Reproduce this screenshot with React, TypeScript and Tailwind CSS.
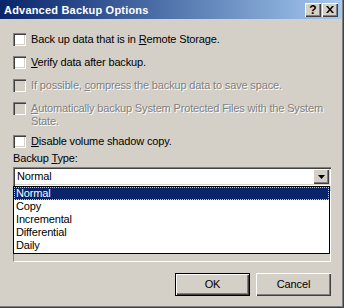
const raised =
  "shadow-[inset_1px_1px_0_#ffffff,inset_-1px_-1px_0_#404040,inset_-2px_-2px_0_#808080]";

function Check({ disabled }: { disabled?: boolean }) {
  return (
    <div
      className={
        "w-[13px] h-[13px] shrink-0 shadow-[inset_1px_1px_0_#808080,inset_2px_2px_0_#404040,inset_-1px_-1px_0_#ffffff,inset_-2px_-2px_0_#d4d0c8] " +
        (disabled ? "bg-[#d4d0c8]" : "bg-white")
      }
    />
  );
}

function Row({
  children,
  disabled,
  className,
}: {
  children: React.ReactNode;
  disabled?: boolean;
  className?: string;
}) {
  return (
    <div className={"flex items-start gap-[5px] " + (className ?? "")}>
      <Check disabled={disabled} />
      <div
        className={
          disabled
            ? "text-[#808080] [text-shadow:1px_1px_0_#ffffff]"
            : "text-black"
        }
      >
        {children}
      </div>
    </div>
  );
}

export default function App() {
  const items = ["Normal", "Copy", "Incremental", "Differential", "Daily"];
  return (
    <div className="w-[344px] h-[308px] bg-[#d4d0c8] relative overflow-hidden text-[11px] leading-[13px] tracking-[-0.15px] text-black font-['Liberation_Sans',Arial,sans-serif] shadow-[inset_-1px_-1px_0_#404040,inset_-2px_-2px_0_#808080]">
      {/* title bar */}
      <div className="w-[342px] h-[19px] flex items-center pr-[4px] bg-gradient-to-r from-[#0a246a] to-[#a6caf0]">
        <span className="pl-[4px] pt-[1px] text-white font-bold tracking-[0.2px]">
          Advanced Backup Options
        </span>
        <div className="ml-auto flex gap-[1px]">
          <div
            className={
              "w-[16px] h-[14px] bg-[#d4d0c8] flex items-center justify-center font-bold text-[12px] leading-[12px] tracking-normal " +
              raised
            }
          >
            ?
          </div>
          <div
            className={
              "w-[16px] h-[14px] bg-[#d4d0c8] flex items-center justify-center " +
              raised
            }
          >
            <svg width="8" height="7" viewBox="0 0 8 7" className="-mt-[1px]">
              <path d="M0 0h2l2 2.5L6 0h2L5 3.5 8 7H6L4 4.5 2 7H0l3-3.5z" fill="#000" />
            </svg>
          </div>
        </div>
      </div>

      {/* body */}
      <div className="pl-[13px] pr-[13px]">
        <Row className="mt-[14px]">
          Back up data that is in <u>R</u>emote Storage.
        </Row>
        <Row className="mt-[10px]">
          <u>V</u>erify data after backup.
        </Row>
        <Row className="mt-[10px]" disabled>
          If possible, <u>c</u>ompress the backup data to save space.
        </Row>
        <Row className="mt-[10px]" disabled>
          <u>A</u>utomatically backup System Protected Files with the System
          <br />
          State.
        </Row>
        <Row className="mt-[7px]">
          <u>D</u>isable volume shadow copy.
        </Row>

        <div className="mt-[4px]">
          Backup <u>T</u>ype:
        </div>

        {/* combo box */}
        <div className="relative mt-[2px]">
          <div className="h-[19px] w-[318px] bg-white flex items-center shadow-[inset_1px_1px_0_#808080,inset_2px_2px_0_#404040,inset_-1px_-1px_0_#ffffff,inset_-2px_-2px_0_#d4d0c8]">
            <span className="pl-[4px]">Normal</span>
            <div
              className={
                "ml-auto mr-[2px] w-[16px] h-[15px] bg-[#d4d0c8] flex items-center justify-center " +
                raised
              }
            >
              <svg width="7" height="4" viewBox="0 0 7 4">
                <path d="M0 0h7L3.5 4z" fill="#000" />
              </svg>
            </div>
          </div>

          {/* frame underneath the open list */}
          <div className="mt-[4px] h-[72px] w-[318px] border-l border-t border-[#808080] border-r-white border-b-white border-r border-b" />

          {/* dropdown list */}
          <div className="absolute left-0 top-[19px] w-[317px] bg-white border border-black pb-[1px]">
            {items.map((it, i) => (
              <div
                key={it}
                className={
                  "h-[13px] leading-[13px] pl-[2px] " +
                  (i === 0
                    ? "bg-[#0a246a] text-white outline-1 outline-dotted outline-[#d4d0c8] -outline-offset-1"
                    : "")
                }
              >
                {it}
              </div>
            ))}
          </div>
        </div>

        {/* buttons */}
        <div className="mt-[11px] flex justify-end gap-[6px]">
          <div
            className={
              "w-[75px] h-[23px] border border-black bg-[#d4d0c8] flex items-center justify-center " +
              raised
            }
          >
            OK
          </div>
          <div
            className={
              "w-[75px] h-[23px] bg-[#d4d0c8] flex items-center justify-center " +
              raised
            }
          >
            Cancel
          </div>
        </div>
      </div>
    </div>
  );
}
